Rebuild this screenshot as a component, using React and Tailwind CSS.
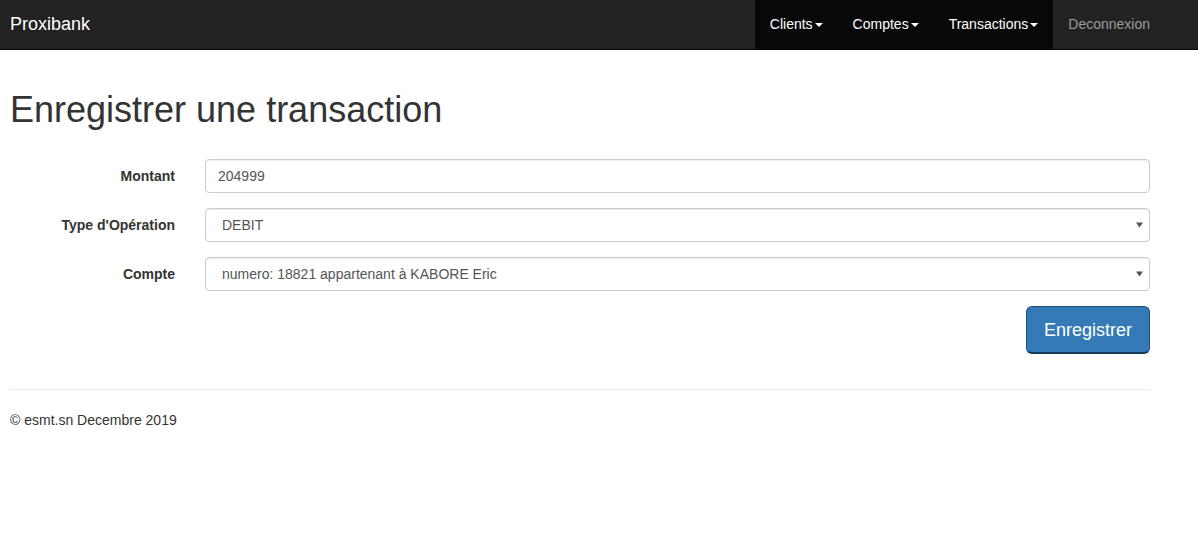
import { useState } from 'react';

const font = { fontFamily: '"Liberation Sans", Arial, sans-serif' };

function Caret() {
  return (
    <span className="ml-[2px] inline-block h-0 w-0 border-x-[4px] border-t-[4px] border-x-transparent border-t-current align-middle" />
  );
}

function NavItem({ label, active, dropdown, muted }) {
  return (
    <a
      href="#"
      className={
        'flex h-[49px] items-center px-[15px] text-[14px] ' +
        (active ? 'bg-[#080808] ' : '') +
        (muted ? 'text-[#9d9d9d]' : 'text-white')
      }
    >
      {label}
      {dropdown && <Caret />}
    </a>
  );
}

function Navbar() {
  return (
    <nav className="flex h-[50px] items-stretch justify-between border-b border-[#080808] bg-[#222222] pl-[10px] pr-[33px]">
      <a href="#" className="flex h-[49px] items-center text-[18px] text-white">
        Proxibank
      </a>
      <div className="flex">
        <div className="flex bg-[#080808]">
          <NavItem label="Clients" active dropdown />
          <NavItem label="Comptes" active dropdown />
          <NavItem label="Transactions" active dropdown />
        </div>
        <NavItem label="Deconnexion" muted />
      </div>
    </nav>
  );
}

function Row({ label, children }) {
  return (
    <div className="grid grid-cols-[165px_1fr] items-center gap-x-[30px]">
      <label className="text-right text-[14px] font-bold text-[#333333]">{label}</label>
      {children}
    </div>
  );
}

function Select({ value, options }) {
  return (
    <div className="relative">
      <select
        defaultValue={value}
        className="h-[34px] w-full appearance-none rounded-[4px] border border-[#cccccc] bg-white pl-[16px] pr-8 text-[14px] text-[#555555] shadow-[inset_0_1px_1px_rgba(0,0,0,0.075)] outline-none"
        style={font}
      >
        {options.map((o) => (
          <option key={o}>{o}</option>
        ))}
      </select>
      <svg
        className="pointer-events-none absolute right-[7px] top-1/2 -translate-y-1/2"
        width="7"
        height="6"
        viewBox="0 0 7 6"
      >
        <path d="M0 0.5h7L3.5 5.5z" fill="#555555" />
      </svg>
    </div>
  );
}

export default function App() {
  const [montant, setMontant] = useState('204999');

  return (
    <div className="min-h-[538px] bg-white" style={font}>
      <Navbar />
      <div className="w-[1140px] px-0 pl-[10px] box-content">
        <h1 className="mt-[40px] text-[36px] leading-[40px] text-[#333333]">
          Enregistrer une transaction
        </h1>

        <form className="mt-[29px] flex flex-col gap-[15px]" onSubmit={(e) => e.preventDefault()}>
          <Row label="Montant">
            <input
              value={montant}
              onChange={(e) => setMontant(e.target.value)}
              className="h-[34px] w-full rounded-[4px] border border-[#cccccc] px-[12px] text-[14px] text-[#555555] shadow-[inset_0_1px_1px_rgba(0,0,0,0.075)] outline-none"
              style={font}
            />
          </Row>
          <Row label="Type d'Opération">
            <Select value="DEBIT" options={['DEBIT', 'CREDIT']} />
          </Row>
          <Row label="Compte">
            <Select
              value="numero: 18821 appartenant à KABORE Eric"
              options={['numero: 18821 appartenant à KABORE Eric']}
            />
          </Row>
          <div className="flex justify-end">
            <button
              type="submit"
              className="h-[48px] w-[124px] rounded-[6px] border border-[#204d74] border-b-[2px] border-b-[#173a5a] bg-[#337ab7] pt-[1px] text-[18px] text-white"
              style={font}
            >
              Enregistrer
            </button>
          </div>
        </form>

        <hr className="mt-[35px] border-t border-[#eeeeee]" />

        <footer className="mt-[20px] text-[14px] leading-[20px] text-[#333333]">
          © esmt.sn Decembre 2019
        </footer>
      </div>
    </div>
  );
}
